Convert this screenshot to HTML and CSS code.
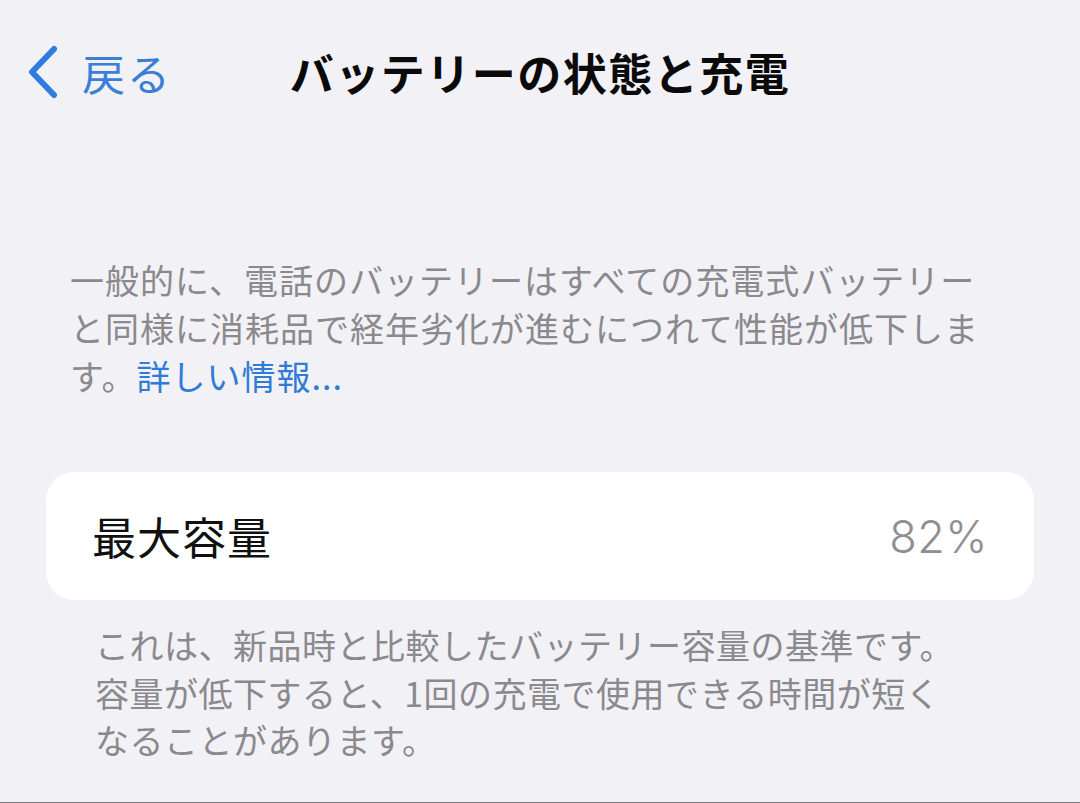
FILE: index.html
```html
<!DOCTYPE html>
<html lang="ja">
<head>
<meta charset="utf-8">
<title>バッテリーの状態と充電</title>
<link rel="stylesheet" href="styles.css">
</head>
<body>
<div class="screen">
  <header class="nav">
    <a class="back" href="#">
      <svg class="chevron" width="34" height="54" viewBox="0 0 34 54" aria-hidden="true">
        <path d="M28 4 L6 27 L28 50" fill="none" stroke="currentColor" stroke-width="6" stroke-linecap="round" stroke-linejoin="round"/>
      </svg>
      <span class="back-label">戻る</span>
    </a>
    <h1 class="title">バッテリーの状態と充電</h1>
    <div class="spacer"></div>
  </header>

  <p class="intro">一般的に、電話のバッテリーはすべての充電式バッテリーと同様に消耗品で経年劣化が進むにつれて性能が低下します。<a class="link" href="#">詳しい情報...</a></p>

  <section class="card">
    <span class="card-label">最大容量</span>
    <span class="card-value">82%</span>
  </section>

  <p class="footnote">これは、新品時と比較したバッテリー容量の基準です。容量が低下すると、1回の充電で使用できる時間が短くなることがあります。</p>
</div>
</body>
</html>
```

FILE: styles.css
```css
html, body {
  margin: 0;
  padding: 0;
  background: #f2f1f6;
}

body {
  font-family: "Noto Sans CJK JP", "Noto Sans", sans-serif;
  color: #000;
}

.screen {
  height: 803px;
  box-sizing: border-box;
  border-bottom: 1px solid #7a7a7a;
  overflow: hidden;
}

.nav {
  height: 144px;
  display: grid;
  grid-template-columns: 1fr auto 1fr;
  align-items: center;
}

.back {
  display: flex;
  align-items: center;
  padding-left: 26px;
  color: #2f7be0;
  text-decoration: none;
}

.chevron {
  display: block;
}

.back-label {
  margin-left: 22px;
  font-size: 43px;
  letter-spacing: 2px;
  color: #3a7ed6;
  line-height: 1;
}

.title {
  margin: 0;
  font-size: 44px;
  font-weight: 700;
  letter-spacing: 1.5px;
  line-height: 1;
  color: #0a0a0a;
}

.intro {
  margin: 112px 0 0 70px;
  width: 925px;
  font-size: 34px;
  letter-spacing: 1px;
  line-height: 48px;
  color: #8a898e;
}

.link {
  color: #2f7bd6;
  text-decoration: none;
}

.card {
  margin: 72px 46px 0 46px;
  height: 128px;
  background: #fff;
  border-radius: 28px;
  display: flex;
  align-items: center;
  justify-content: space-between;
  padding: 0 46px 0 46px;
}

.card-label {
  font-size: 44px;
  letter-spacing: 1px;
  color: #111;
  line-height: 1;
}

.card-value {
  font-family: Inter, "Noto Sans", sans-serif;
  font-weight: 300;
  font-size: 45px;
  letter-spacing: 0.5px;
  color: #8e8e93;
  line-height: 1;
}

.footnote {
  margin: 21px 0 0 95px;
  width: 866px;
  font-size: 34px;
  letter-spacing: 0.5px;
  line-height: 47.5px;
  color: #8a898e;
}
```
